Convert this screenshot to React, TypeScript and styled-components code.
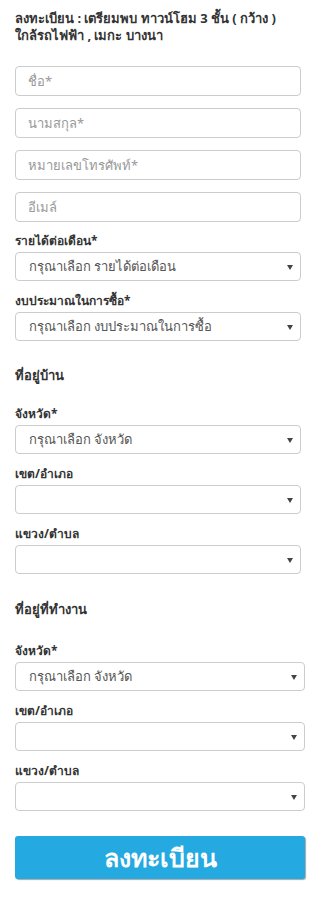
import React from "react";
import styled, { createGlobalStyle } from "styled-components";

const Global = createGlobalStyle`
  html, body { margin: 0; padding: 0; background: #fff; }
  body { font-family: Tahoma, "Noto Sans", "DejaVu Sans", sans-serif; color: #333; }
  * { box-sizing: border-box; }
`;

const Page = styled.div`
  width: 330px;
  padding: 10px 0 19px 15px;
`;

const Title = styled.h1`
  margin: 0;
  font-size: 13px;
  line-height: 17px;
  font-weight: bold;
  color: #333;
  width: 290px;
`;

const NoWrap = styled.span`
  white-space: nowrap;
`;

const Section = styled.div<{ $right: number }>`
  display: flex;
  flex-direction: column;
  width: ${(p) => 315 - p.$right}px;
`;

const Input = styled.input`
  display: block;
  width: 100%;
  height: 30px;
  border: 1px solid #ccc;
  border-radius: 4px;
  padding: 0 12px;
  font: inherit;
  font-size: 13px;
  color: #555;
  margin-top: 12px;
  &::placeholder { color: #999; }
  &:first-child { margin-top: 0; }
`;

const Label = styled.div<{ $top: number }>`
  font-size: 12px;
  font-weight: bold;
  line-height: 16px;
  margin-top: ${(p) => p.$top}px;
  margin-bottom: 3px;
  color: #333;
`;

const Heading = styled.div<{ $top: number; $bottom: number }>`
  font-size: 13px;
  font-weight: bold;
  line-height: 18px;
  margin-top: ${(p) => p.$top}px;
  margin-bottom: ${(p) => p.$bottom}px;
  color: #333;
`;

const SelectBox = styled.div`
  position: relative;
  height: 29px;
  border: 1px solid #ccc;
  border-radius: 4px;
  background: #fff;
  display: flex;
  align-items: center;
  padding: 0 16px 0 13px;
  font-size: 13px;
  color: #555;
`;

const Arrow = styled.span`
  position: absolute;
  right: 7px;
  top: 50%;
  margin-top: -2px;
  width: 0;
  height: 0;
  border-left: 3px solid transparent;
  border-right: 3px solid transparent;
  border-top: 5px solid #444;
`;

const Button = styled.button`
  display: flex;
  align-items: center;
  justify-content: center;
  width: 290px;
  height: 43px;
  margin-top: 25px;
  background: #25a9e1;
  border: none;
  border-radius: 3px;
  box-shadow: 1px 1px 1px rgba(0, 0, 0, 0.35);
  color: #fff;
  font-family: inherit;
  font-size: 25px;
  font-weight: bold;
  padding: 0;
`;

const Select = ({ text }: { text?: string }) => (
  <SelectBox>
    {text}
    <Arrow />
  </SelectBox>
);

export default function App() {
  return (
    <Page>
      <Global />
      <Title>
        ลงทะเบียน : เตรียมพบ ทาวน์โฮม 3 ชั้น ( กว้าง ) <NoWrap>ใกล้รถไฟฟ้า</NoWrap> , เมกะ บางนา
      </Title>
      <Section $right={29} style={{ marginTop: 22 }}>
        <Input placeholder="ชื่อ*" />
        <Input placeholder="นามสกุล*" />
        <Input placeholder="หมายเลขโทรศัพท์*" />
        <Input placeholder="อีเมล์" />
        <Label $top={11}>รายได้ต่อเดือน*</Label>
        <Select text="กรุณาเลือก รายได้ต่อเดือน" />
        <Label $top={12}>งบประมาณในการซื้อ*</Label>
        <Select text="กรุณาเลือก งบประมาณในการซื้อ" />
        <Heading $top={25} $bottom={22}>ที่อยู่บ้าน</Heading>
        <Label $top={0}>จังหวัด*</Label>
        <Select text="กรุณาเลือก จังหวัด" />
        <Label $top={12}>เขต/อำเภอ</Label>
        <Select />
        <Label $top={12}>แขวง/ตำบล</Label>
        <Select />
      </Section>
      <Section $right={25}>
        <Heading $top={26} $bottom={25}>ที่อยู่ที่ทำงาน</Heading>
        <Label $top={0}>จังหวัด*</Label>
        <Select text="กรุณาเลือก จังหวัด" />
        <Label $top={12}>เขต/อำเภอ</Label>
        <Select />
        <Label $top={12}>แขวง/ตำบล</Label>
        <Select />
        <Button>ลงทะเบียน</Button>
      </Section>
    </Page>
  );
}
